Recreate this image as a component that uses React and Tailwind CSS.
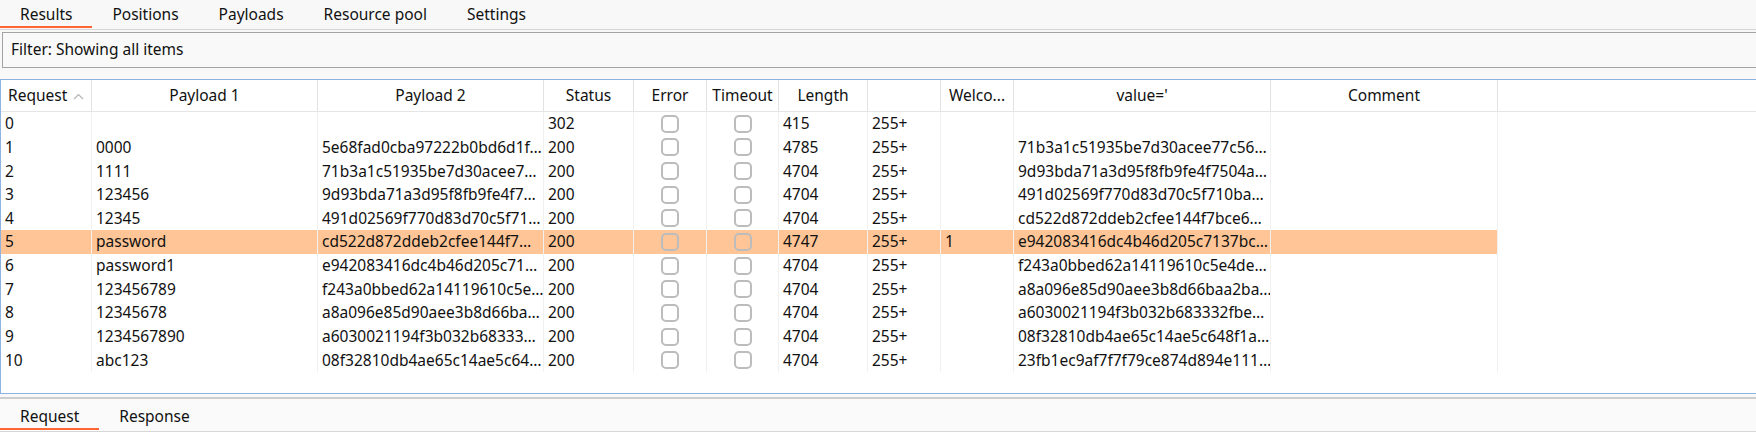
import React from "react";

// column layout of the intruder results table
const columns = [
  { key: "req", label: "Request", w: "w-[91px]", sort: true },
  { key: "p1", label: "Payload 1", w: "w-[226px]" },
  { key: "p2", label: "Payload 2", w: "w-[226px]" },
  { key: "status", label: "Status", w: "w-[90px]" },
  { key: "error", label: "Error", w: "w-[73px]", check: true },
  { key: "timeout", label: "Timeout", w: "w-[72px]", check: true },
  { key: "length", label: "Length", w: "w-[89px]" },
  { key: "grep", label: "", w: "w-[73px]" },
  { key: "welcome", label: "Welco...", w: "w-[73px]" },
  { key: "value", label: "value='", w: "w-[257px]" },
  { key: "comment", label: "Comment", w: "w-[227px]" },
];

const rows = [
  { req: "0", p1: "", p2: "", status: "302", length: "415", grep: "255+", welcome: "", value: "" },
  { req: "1", p1: "0000", p2: "5e68fad0cba97222b0bd6d1f…", status: "200", length: "4785", grep: "255+", welcome: "", value: "71b3a1c51935be7d30acee77c56…" },
  { req: "2", p1: "1111", p2: "71b3a1c51935be7d30acee7…", status: "200", length: "4704", grep: "255+", welcome: "", value: "9d93bda71a3d95f8fb9fe4f7504a…" },
  { req: "3", p1: "123456", p2: "9d93bda71a3d95f8fb9fe4f7…", status: "200", length: "4704", grep: "255+", welcome: "", value: "491d02569f770d83d70c5f710ba…" },
  { req: "4", p1: "12345", p2: "491d02569f770d83d70c5f71…", status: "200", length: "4704", grep: "255+", welcome: "", value: "cd522d872ddeb2cfee144f7bce6…" },
  { req: "5", p1: "password", p2: "cd522d872ddeb2cfee144f7…", status: "200", length: "4747", grep: "255+", welcome: "1", value: "e942083416dc4b46d205c7137bc…", hl: true },
  { req: "6", p1: "password1", p2: "e942083416dc4b46d205c71…", status: "200", length: "4704", grep: "255+", welcome: "", value: "f243a0bbed62a14119610c5e4de…" },
  { req: "7", p1: "123456789", p2: "f243a0bbed62a14119610c5e…", status: "200", length: "4704", grep: "255+", welcome: "", value: "a8a096e85d90aee3b8d66baa2ba…" },
  { req: "8", p1: "12345678", p2: "a8a096e85d90aee3b8d66ba…", status: "200", length: "4704", grep: "255+", welcome: "", value: "a6030021194f3b032b683332fbe…" },
  { req: "9", p1: "1234567890", p2: "a6030021194f3b032b68333…", status: "200", length: "4704", grep: "255+", welcome: "", value: "08f32810db4ae65c14ae5c648f1a…" },
  { req: "10", p1: "abc123", p2: "08f32810db4ae65c14ae5c64…", status: "200", length: "4704", grep: "255+", welcome: "", value: "23fb1ec9af7f7f79ce874d894e111…" },
];

const Tab = ({ label, active, top }) => (
  <div className="flex flex-col h-full">
    <div className={`${top ? "pt-[4px]" : "pt-[7px]"} px-5 leading-[20px] whitespace-nowrap`}>{label}</div>
    <div className="flex-1" />
    <div className={`h-[2px] mb-[1px] ${active ? "bg-[#ff6633]" : ""}`} />
  </div>
);

const CheckBox = () => (
  <div className="w-[18px] h-[18px] rounded-[5px] border-2 border-[#bcbcbc]" />
);

const SortArrow = () => (
  <svg width="11" height="7" viewBox="0 0 11 7" className="ml-[6px] mt-[1px]">
    <polyline points="1,6 5.5,1.5 10,6" fill="none" stroke="#b5b5b5" strokeWidth="1.2" />
  </svg>
);

export default function App() {
  return (
    <div className="w-[1756px] h-[445px] flex flex-col bg-[#f8f8f8] overflow-hidden text-[15.5px] text-[#111] font-['Noto_Sans',sans-serif]">
      {/* top tabs */}
      <div className="h-[30px] flex border-b border-[#d6d6d6]">
        <Tab label="Results" active top />
        <Tab label="Positions" top />
        <Tab label="Payloads" top />
        <Tab label="Resource pool" top />
        <Tab label="Settings" top />
      </div>

      {/* filter bar */}
      <div className="mt-[2px] ml-[2px] h-[36px] flex items-center pl-2 border-y border-l border-[#a3a3a3] bg-[#f9f9f9]">
        Filter: Showing all items
      </div>

      {/* results table */}
      <div className="mt-[11px] h-[315px] border-y border-l border-[#8db3e2] bg-white flex flex-col">
        <div className="flex h-[32px] border-b border-[#e5e5e5]">
          {columns.map((c) => (
            <div
              key={c.key}
              className={`${c.w} shrink-0 flex items-center border-r border-[#e2e2e2] whitespace-nowrap ${c.sort ? "pl-[7px]" : "justify-center"}`}
            >
              {c.label}
              {c.sort && <SortArrow />}
            </div>
          ))}
        </div>
        {rows.map((r) => (
          <div key={r.req} className={`flex w-max h-[23.67px] ${r.hl ? "bg-[#ffc596]" : ""}`}>
            {columns.map((c) => (
              <div
                key={c.key}
                className={`${c.w} shrink-0 flex items-center border-r border-[#f1f1f1] overflow-hidden whitespace-nowrap ${c.check ? "justify-center" : "pl-1"}`}
              >
                {c.check ? <CheckBox /> : r[c.key] || ""}
              </div>
            ))}
          </div>
        ))}
      </div>

      {/* request / response tabs */}
      <div className="mt-[3px] border-t-2 border-[#cdcdcd] h-[35px] flex border-b border-b-[#d6d6d6] bg-[#fafafa]">
        <Tab label="Request" active />
        <Tab label="Response" />
      </div>
      <div className="flex-1 bg-white" />
    </div>
  );
}
